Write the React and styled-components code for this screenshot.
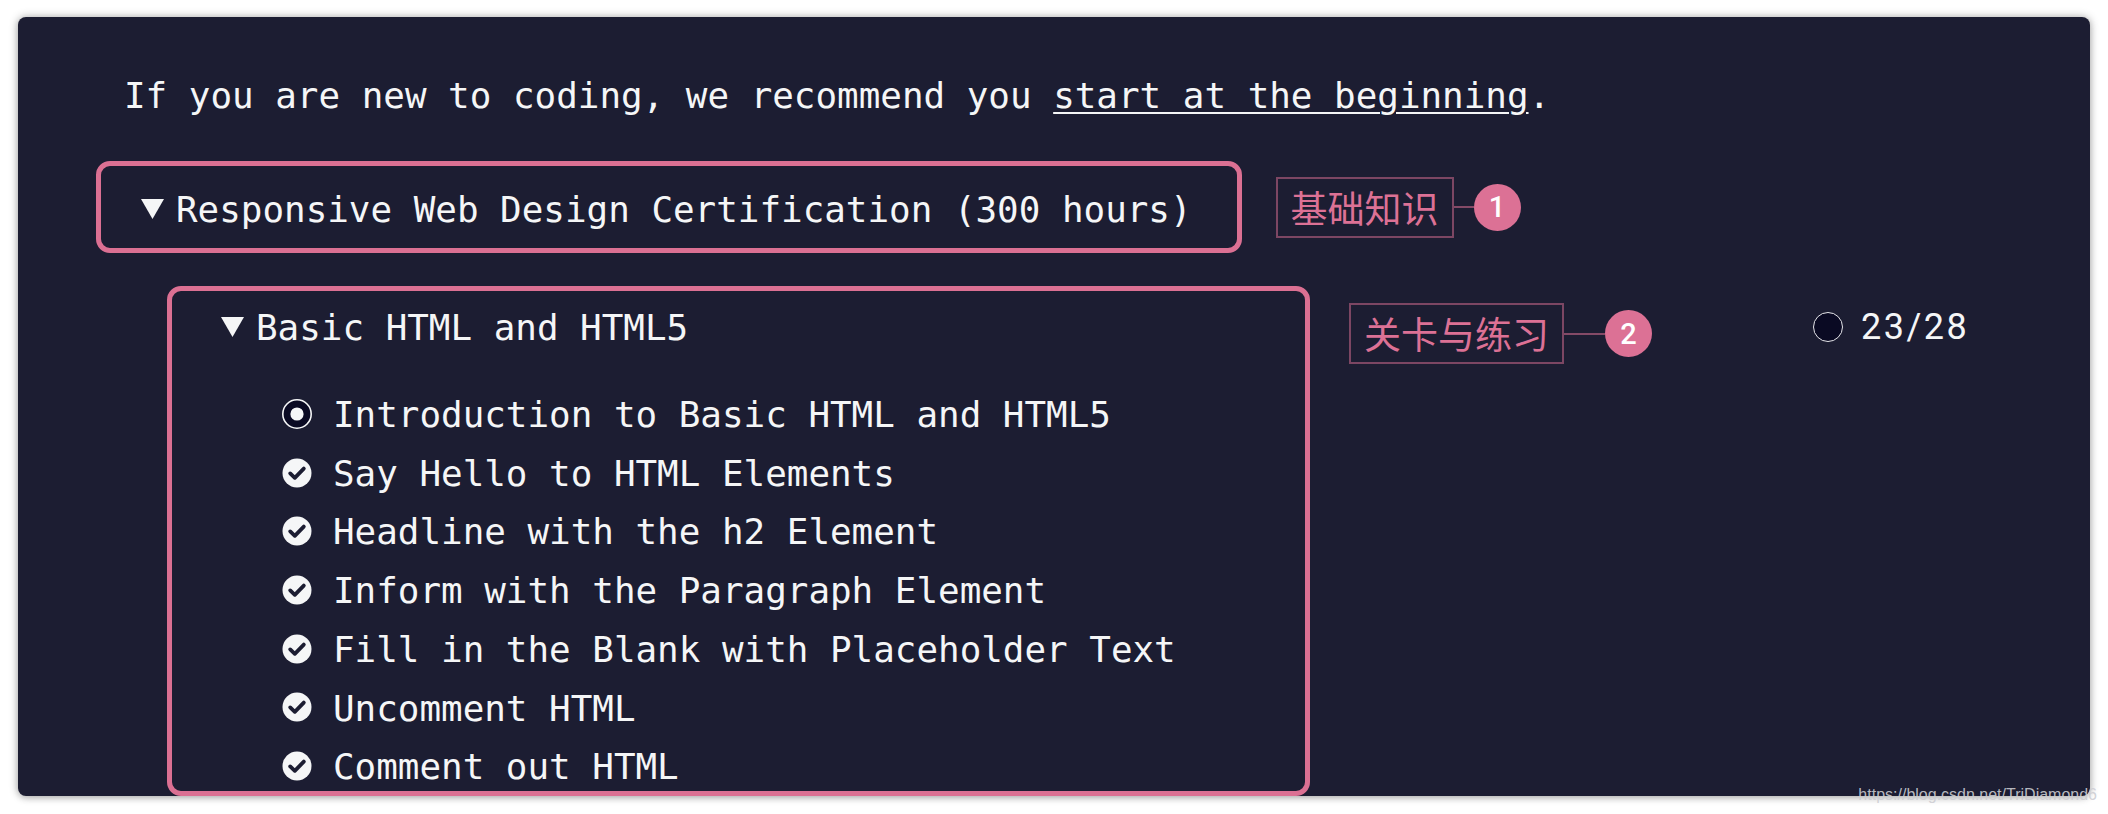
import React from 'react'
import styled, { createGlobalStyle } from 'styled-components'

//----------- Styling ------------------//
const GlobalStyle = createGlobalStyle`
  html, body {
    margin: 0;
    padding: 0;
    background: #ffffff;
  }
`

const Page = styled.div`
  position: relative;
  min-height: 814px;
  padding: 17px 18px 0 18px;
  box-sizing: border-box;
`

const Panel = styled.div`
  height: 779px;
  box-sizing: border-box;
  padding: 52px 0 0 78px;
  background: #1c1d32;
  border-radius: 8px;
  box-shadow: 0 0 10px rgba(0, 0, 0, 0.3), 0 2px 6px rgba(0, 0, 0, 0.15);
  overflow: hidden;
  color: #f5f6f7;
  font-family: 'DejaVu Sans Mono', 'Liberation Mono', monospace;
  font-size: 35.9px;
  line-height: 54px;
`

const Intro = styled.p`
  margin: 0 0 38px 28px;
  white-space: nowrap;

  a {
    color: inherit;
    text-decoration: underline;
    text-decoration-thickness: 2px;
    text-underline-offset: 4px;
  }
`

const Row = styled.div`
  display: flex;
  align-items: ${p => p.$align || 'center'};
`

const Outline = styled.div`
  box-sizing: border-box;
  border: 5px solid #db7093;
  border-radius: 14px;
`

const CertBox = styled(Outline)`
  display: flex;
  align-items: center;
  height: 92px;
  padding: 17px 45px 11px 40px;
`

const BlockBox = styled(Outline)`
  width: 1143px;
  height: 510px;
  margin-left: 71px;
  padding: 10px 0 0 49px;
  overflow: hidden;
`

const Heading = styled.div`
  display: flex;
  align-items: center;
  gap: 12px;
  white-space: nowrap;
`

const Caret = styled.svg`
  width: 23px;
  height: 20px;
  flex: none;
  margin-top: -2px;
`

const Challenges = styled.ul`
  list-style: none;
  margin: 31px 0 0 61px;
  padding: 0;
`

const Challenge = styled.li`
  display: flex;
  align-items: center;
  gap: 21px;
  line-height: 58.7px;
  white-space: nowrap;
`

const StatusIcon = styled.svg`
  width: 30px;
  height: 30px;
  flex: none;
  margin-top: -3px;
`

const Annotation = styled.div`
  display: flex;
  align-items: center;
  margin-left: ${p => p.$offset}px;
  margin-top: ${p => p.$top || 0}px;
`

const Label = styled.div`
  box-sizing: border-box;
  height: 61px;
  display: flex;
  align-items: center;
  padding: 0 13px;
  border: 2px solid rgba(219, 112, 147, 0.5);
  color: #dc7195;
  font-family: 'Noto Sans CJK SC', 'Noto Sans', sans-serif;
  font-size: 37px;
  line-height: 1;
  white-space: nowrap;
`

const Connector = styled.span`
  width: ${p => p.$length}px;
  height: 2px;
  background: rgba(219, 112, 147, 0.55);
`

const Badge = styled.span`
  width: 47px;
  height: 47px;
  border-radius: 50%;
  background: #dc7195;
  color: #ffffff;
  display: flex;
  align-items: center;
  justify-content: center;
  font-family: Roboto, 'Noto Sans', sans-serif;
  font-size: 29px;
  font-weight: 500;
`

const Progress = styled.div`
  display: flex;
  align-items: center;
  gap: 18px;
  height: 54px;
  margin: 14px 0 0 161px;
  font-family: Roboto, 'Noto Sans', sans-serif;
  font-size: 36px;
  letter-spacing: 2.5px;
`

const Ring = styled.span`
  width: 30px;
  height: 30px;
  box-sizing: border-box;
  border-radius: 50%;
  border: 1.5px solid #e6e6ea;
  background: #0a0a23;
`

const Watermark = styled.div`
  position: absolute;
  right: 11px;
  top: 786px;
  font-family: 'Liberation Sans', Arial, sans-serif;
  font-size: 16px;
  line-height: 18px;
  color: rgba(205, 205, 210, 0.9);
`
//--------------------------------------//

const challenges = [
  { title: 'Introduction to Basic HTML and HTML5', current: true },
  { title: 'Say Hello to HTML Elements' },
  { title: 'Headline with the h2 Element' },
  { title: 'Inform with the Paragraph Element' },
  { title: 'Fill in the Blank with Placeholder Text' },
  { title: 'Uncomment HTML' },
  { title: 'Comment out HTML' },
]

function DownCaret() {
  return (
    <Caret viewBox='0 0 23 20'>
      <polygon points='0,0 23,0 11.5,20' fill='#f5f6f7' />
    </Caret>
  )
}

function Status({ current }) {
  if (current) {
    return (
      <StatusIcon viewBox='0 0 30 30'>
        <circle cx='15' cy='15' r='14.2' fill='#0a0a23' stroke='#f5f6f7' strokeWidth='1.6' />
        <circle cx='15' cy='15' r='6.6' fill='#f5f6f7' />
      </StatusIcon>
    )
  }
  return (
    <StatusIcon viewBox='0 0 30 30'>
      <circle cx='15' cy='15' r='14.5' fill='#f5f6f7' />
      <path d='M8.2 15.4 L12.8 19.8 L21.8 10.6' fill='none' stroke='#1c1d32' strokeWidth='3.8' strokeLinecap='round' strokeLinejoin='round' />
    </StatusIcon>
  )
}

function Note({ text, num, offset, top, line }) {
  return (
    <Annotation $offset={offset} $top={top}>
      <Label>{text}</Label>
      <Connector $length={line} />
      <Badge>{num}</Badge>
    </Annotation>
  )
}

export default function App() {
  return (
    <Page>
      <GlobalStyle />
      <Panel>
        <Intro>
          If you are new to coding, we recommend you <a href='#start'>start at the beginning</a>.
        </Intro>

        <Row>
          <CertBox>
            <Heading>
              <DownCaret />
              <span>Responsive Web Design Certification (300 hours)</span>
            </Heading>
          </CertBox>
          <Note text='基础知识' num='1' offset={34} line={20} />
        </Row>

        <Row $align='flex-start' style={{ marginTop: 33 }}>
          <BlockBox>
            <Heading>
              <DownCaret />
              <span>Basic HTML and HTML5</span>
            </Heading>
            <Challenges>
              {challenges.map(c => (
                <Challenge key={c.title}>
                  <Status current={c.current} />
                  <span>{c.title}</span>
                </Challenge>
              ))}
            </Challenges>
          </BlockBox>
          <Note text='关卡与练习' num='2' offset={39} top={17} line={41} />
          <Progress>
            <Ring />
            <span>23/28</span>
          </Progress>
        </Row>
      </Panel>
      <Watermark>https://blog.csdn.net/TriDiamond6</Watermark>
    </Page>
  )
}
